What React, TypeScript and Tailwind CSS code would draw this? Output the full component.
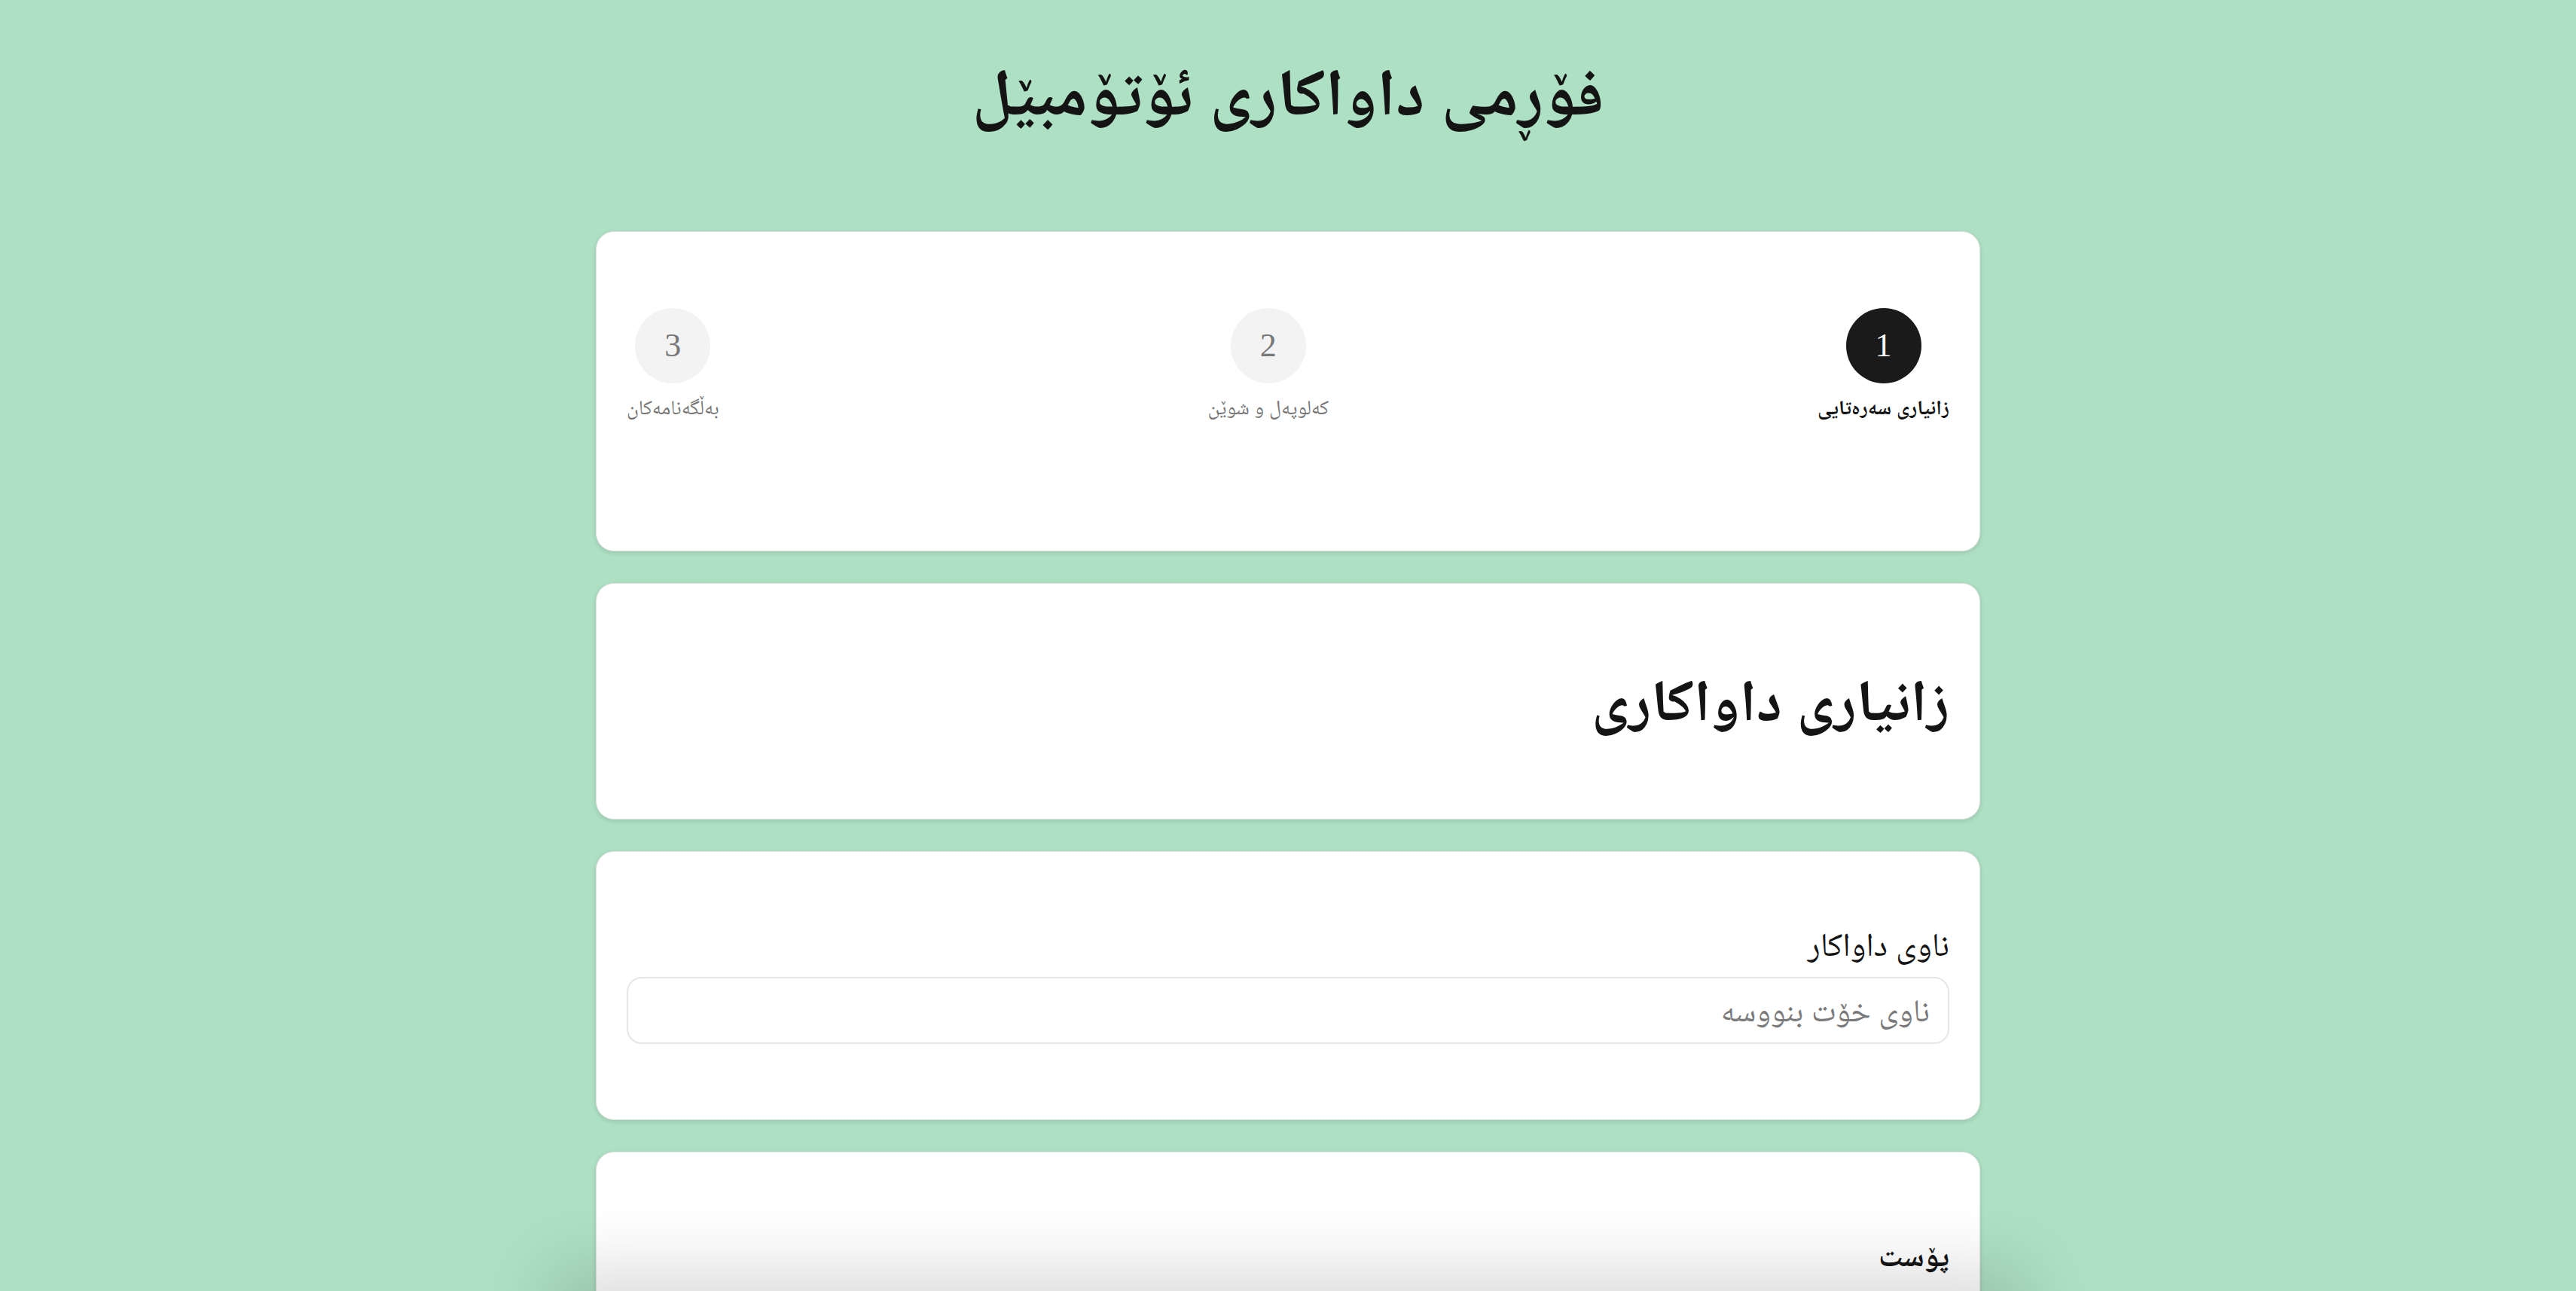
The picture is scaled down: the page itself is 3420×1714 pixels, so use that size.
import { useState } from 'react';

const steps = [
  { n: 1, label: 'زانیاری سەرەتایی' },
  { n: 2, label: 'کەلوپەل و شوێن' },
  { n: 3, label: 'بەڵگەنامەکان' },
];

export default function App() {
  const [current] = useState(1);
  const [name, setName] = useState('');

  return (
    <div dir="rtl" className="min-h-screen bg-[#aee0c3] font-['Liberation_Serif','Noto_Naskh_Arabic','Noto_Serif_Arabic','Amiri','Scheherazade_New','Noto_Sans_Arabic',serif] text-[#141414] pb-[200px]">
      <h1 className="text-center text-[88px] font-bold leading-none pt-[80px] pb-[139px]">
        فۆڕمی داواکاری ئۆتۆمبێل
      </h1>

      <div className="mx-auto w-[1838px] flex flex-col gap-[42px]">
        {/* steps */}
        <div className="bg-white rounded-[24px] border border-[#e2e2e2] shadow-[0_2px_6px_rgba(0,0,0,0.12)] px-10 pt-[101px] pb-[172px]">
          <div className="flex justify-between">
            {steps.map((s) => {
              const active = s.n === current;
              return (
                <div key={s.n} className="flex flex-col items-center gap-[14px]">
                  <div
                    className={
                      active
                        ? 'w-[100px] h-[100px] rounded-full bg-[#1a1a1a] text-white flex items-center justify-center text-[44px]'
                        : 'w-[100px] h-[100px] rounded-full bg-[#f3f3f3] text-[#777] flex items-center justify-center text-[44px]'
                    }
                  >
                    {s.n}
                  </div>
                  <span className={active ? 'text-[27px] leading-[36px] font-bold text-[#141414]' : 'text-[27px] leading-[36px] text-[#777]'}>
                    {s.label}
                  </span>
                </div>
              );
            })}
          </div>
        </div>

        {/* section title */}
        <div className="bg-white rounded-[24px] border border-[#e2e2e2] shadow-[0_2px_6px_rgba(0,0,0,0.12)] px-10 h-[314px] flex items-center">
          <h2 className="text-[78px] leading-[96px] font-bold">زانیاری داواکاری</h2>
        </div>

        {/* name field */}
        <div className="bg-white rounded-[24px] border border-[#e2e2e2] shadow-[0_2px_6px_rgba(0,0,0,0.12)] px-10 pt-[92px] pb-[100px]">
          <label className="block text-[44px] leading-[64px] mb-[10px]">ناوی داواکار</label>
          <input
            value={name}
            onChange={(e) => setName(e.target.value)}
            placeholder="ناوی خۆت بنووسە"
            className="w-full h-[89px] rounded-[20px] border-2 border-[#e6e6e6] px-6 text-[42px] placeholder:text-[#7a7a7a] outline-none"
          />
        </div>

        {/* next section */}
        <div className="bg-white rounded-[24px] border border-[#e2e2e2] shadow-[0_2px_6px_rgba(0,0,0,0.12)] px-10 pt-[108px] pb-[120px]">
          <h3 className="text-[40px] leading-[60px] font-bold">پۆست</h3>
        </div>
      </div>

      <div className="fixed left-1/2 -translate-x-1/2 bottom-[-120px] w-[1900px] h-[120px] bg-white shadow-[0_0_90px_30px_rgba(0,0,0,0.14)] pointer-events-none" />
    </div>
  );
}
